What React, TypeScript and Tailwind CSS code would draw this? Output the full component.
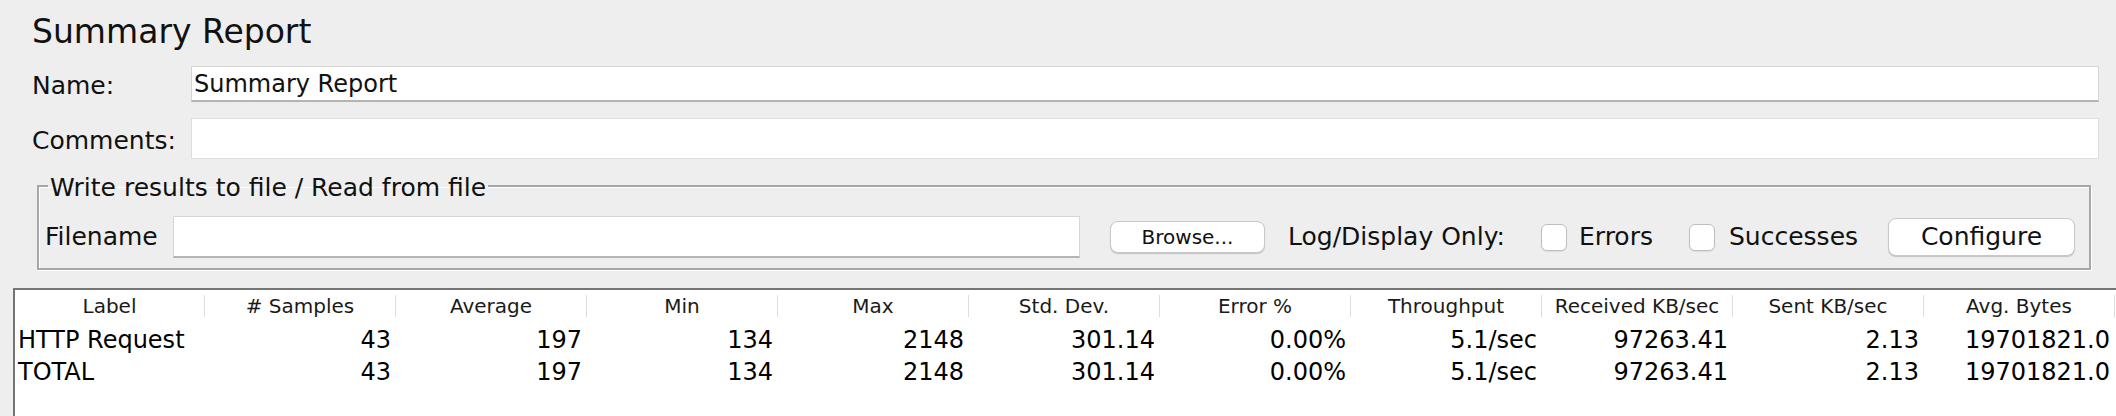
import React from "react";

const COLUMNS = [
  "Label",
  "# Samples",
  "Average",
  "Min",
  "Max",
  "Std. Dev.",
  "Error %",
  "Throughput",
  "Received KB/sec",
  "Sent KB/sec",
  "Avg. Bytes",
];

const ROWS: string[][] = [
  ["HTTP Request", "43", "197", "134", "2148", "301.14", "0.00%", "5.1/sec", "97263.41", "2.13", "19701821.0"],
  ["TOTAL", "43", "197", "134", "2148", "301.14", "0.00%", "5.1/sec", "97263.41", "2.13", "19701821.0"],
];

function TextField({ value, className }: { value?: string; className?: string }) {
  return (
    <div
      className={
        "flex items-center bg-white border border-[#d6d6d6] border-b-2 border-b-[#b4b4b4] px-[2px] text-[24px] leading-[28px] " +
        (className ?? "")
      }
    >
      {value}
    </div>
  );
}

function Checkbox() {
  return (
    <span className="block h-[27px] w-[26px] shrink-0 rounded-[6px] border border-[#bebebe] bg-white shadow-[0_1px_1px_rgba(0,0,0,0.08)]" />
  );
}

export default function App() {
  return (
    <div className="h-[416px] w-full overflow-hidden bg-[#eeeeee] font-['DejaVu_Sans',sans-serif] text-[#111]">
      <h1 className="mt-[12px] h-[40px] pl-[32px] text-[33px] leading-[40px] font-normal">Summary Report</h1>

      <div className="mt-[14px] flex h-[36px] items-center pl-[32px] pr-[17px]">
        <span className="mt-[3px] w-[159px] shrink-0 text-[25px] leading-[28px]">Name:</span>
        <TextField value="Summary Report" className="h-[36px] flex-1" />
      </div>

      <div className="mt-[16px] flex h-[41px] items-center pl-[32px] pr-[17px]">
        <span className="mt-[4px] w-[159px] shrink-0 text-[25px] leading-[28px]">Comments:</span>
        <div className="h-[41px] flex-1 border border-[#dedede] bg-white" />
      </div>

      <fieldset className="mt-[11px] ml-[37px] mr-[25px] border-2 border-[#a7a7a7] pl-[6px] pr-[11px] pt-[14px] pb-[10px] shadow-[inset_1px_1px_0_#ffffff,1px_1px_0_#ffffff]">
        <legend className="ml-[3px] px-[2px] pt-[4px] text-[25px] leading-[28px]">Write results to file / Read from file</legend>
        <div className="flex h-[42px] items-center text-[25px] leading-[28px]">
          <span className="w-[128px] shrink-0">Filename</span>
          <div className="h-[42px] w-[907px] shrink-0 border border-[#d6d6d6] border-b-2 border-b-[#b4b4b4] bg-white" />
          <button className="ml-[30px] h-[32px] w-[155px] shrink-0 rounded-[8px] border border-[#c8c8c8] bg-white text-[20px] leading-[24px] shadow-[0_1px_1px_rgba(0,0,0,0.18)]">
            Browse...
          </button>
          <span className="ml-[23px] w-[253px] shrink-0 whitespace-nowrap">Log/Display Only:</span>
          <Checkbox />
          <span className="ml-[12px] w-[110px] shrink-0">Errors</span>
          <Checkbox />
          <span className="ml-[14px] w-[159px] shrink-0">Successes</span>
          <button className="h-[38px] w-[187px] shrink-0 rounded-[8px] border border-[#c8c8c8] bg-white text-[25px] leading-[28px] shadow-[0_1px_1px_rgba(0,0,0,0.18)]">
            Configure
          </button>
        </div>
      </fieldset>

      <div className="mt-[18px] ml-[13px] h-[200px] w-[2105px] border-l-2 border-t-2 border-[#757575] bg-white">
        <div className="grid h-[32px] grid-cols-[190px_repeat(10,191px)] text-[20px] text-[#1a1a1a]">
          {COLUMNS.map((c) => (
            <div key={c} className="flex items-center">
              <span className="flex-1 whitespace-nowrap text-center">{c}</span>
              <span className="h-[22px] w-px shrink-0 bg-[#dedede]" />
            </div>
          ))}
        </div>
        {ROWS.map((row, i) => (
          <div key={i} className="grid h-[32px] grid-cols-[190px_repeat(10,191px)] items-center text-[24px] text-black">
            {row.map((v, j) => (
              <span
                key={j}
                className={j === 0 ? "whitespace-nowrap pl-[3px]" : "whitespace-nowrap pr-[5px] text-right"}
              >
                {v}
              </span>
            ))}
          </div>
        ))}
      </div>
    </div>
  );
}
